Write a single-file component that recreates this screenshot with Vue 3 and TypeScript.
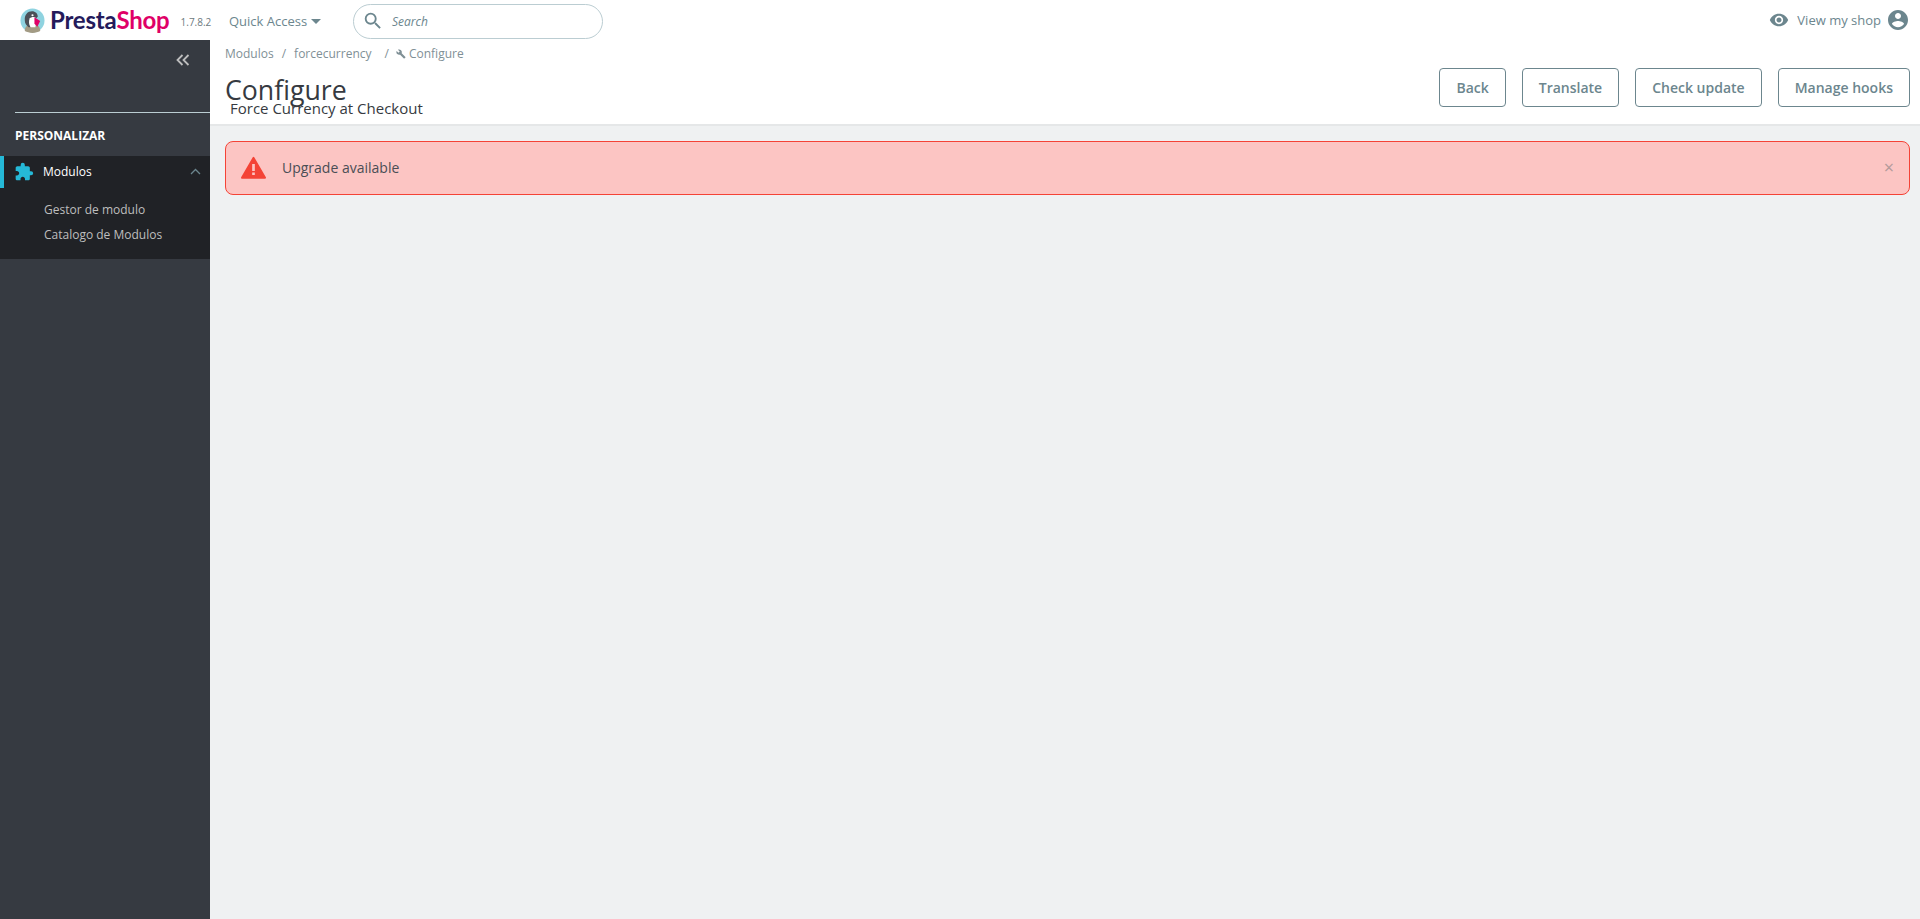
<script setup lang="ts">
const crumbs = ['Modulos', 'forcecurrency']
const toolbar = ['Back', 'Translate', 'Check update', 'Manage hooks']
const subItems = ['Gestor de modulo', 'Catalogo de Modulos']
</script>

<template>
  <div class="page">
    <header class="topbar">
      <div class="logo">
        <svg class="bird" width="25" height="25" viewBox="0 0 26 26">
          <circle cx="13" cy="13" r="12.500" fill="#8fd3e0" />
          <path d="M5 24c0-3 1-5 3-6h10c2 1 3 3 3 6-4 2.500-12 2.500-16 0z" fill="#a39b84" />
          <path d="M5 13C4.500 7 8 3.500 12.500 3.500c3.500 0 6 2.500 6 5.500l-2 2H11c-1 3-1 6 0 9H9c-2.500-2-4-4-4-7z" fill="#4b4f57" />
          <path d="M10 11c1.500-1.500 4-2 6-1l1 3-1 7h-5c-2-3-2-6-1-9z" fill="#fff" />
          <path d="M15 9.500l6 4-3 6-3-3z" fill="#df0067" />
          <circle cx="13" cy="7.500" r="1.100" fill="#fff" />
        </svg>
        <span class="brand"><span class="presta">Presta</span><span class="shop">Shop</span></span>
        <span class="version">1.7.8.2</span>
      </div>
      <div class="quick">Quick Access<span class="caret"></span></div>
      <div class="search">
        <svg width="22" height="22" viewBox="0 0 24 24" fill="#6c868e">
          <path d="M15.500 14h-.79l-.28-.27A6.470 6.470 0 0 0 16 9.500 6.500 6.500 0 1 0 9.500 16c1.610 0 3.090-.59 4.230-1.570l.27.28v.79l5 4.990L20.490 19l-4.990-5zm-6 0C7.010 14 5 11.990 5 9.500S7.010 5 9.500 5 14 7.010 14 9.500 11.990 14 9.500 14z" />
        </svg>
        <span>Search</span>
      </div>
      <div class="shop-link">
        <svg width="20" height="20" viewBox="0 0 24 24" fill="#6c868e">
          <path d="M12 4.500C7 4.500 2.730 7.610 1 12c1.730 4.390 6 7.500 11 7.500s9.270-3.110 11-7.500c-1.730-4.390-6-7.500-11-7.500zM12 17c-2.760 0-5-2.240-5-5s2.240-5 5-5 5 2.240 5 5-2.240 5-5 5zm0-8c-1.660 0-3 1.340-3 3s1.340 3 3 3 3-1.340 3-3-1.340-3-3-3z" />
        </svg>
        <span>View my shop</span>
        <svg width="24" height="24" viewBox="0 0 24 24" fill="#6c868e">
          <path d="M12 2C6.480 2 2 6.480 2 12s4.480 10 10 10 10-4.480 10-10S17.520 2 12 2zm0 3c1.660 0 3 1.340 3 3s-1.340 3-3 3-3-1.340-3-3 1.340-3 3-3zm0 14.200c-2.500 0-4.710-1.280-6-3.220.03-1.990 4-3.080 6-3.080s5.970 1.090 6 3.080c-1.290 1.940-3.500 3.220-6 3.220z" />
        </svg>
      </div>
    </header>

    <div class="body">
      <aside class="sidebar">
        <div class="collapse-row">
          <svg width="14" height="12" viewBox="0 0 14 12" fill="none" stroke="#bebebe" stroke-width="1.800">
            <path d="M6.500 1L1.500 6l5 5M12.500 1l-5 5 5 5" />
          </svg>
        </div>
        <div class="rule"></div>
        <div class="section">PERSONALIZAR</div>
        <div class="group">
          <div class="active-row">
            <svg width="20" height="20" viewBox="0 0 24 24" fill="#25b9d7">
              <path d="M20.500 11H19V7c0-1.100-.9-2-2-2h-4V3.500a2.500 2.500 0 0 0-5 0V5H4c-1.100 0-1.990.9-1.990 2v3.800H3.500c1.490 0 2.700 1.210 2.700 2.700s-1.210 2.700-2.700 2.700H2V20c0 1.100.9 2 2 2h3.800v-1.500c0-1.490 1.210-2.700 2.700-2.700 1.490 0 2.700 1.210 2.700 2.700V22H17c1.100 0 2-.9 2-2v-4h1.500a2.500 2.500 0 0 0 0-5z" />
            </svg>
            <span class="active-label">Modulos</span>
            <svg class="chev" width="11" height="7" viewBox="0 0 11 7" fill="none" stroke="#6c868e" stroke-width="1.300">
              <path d="M1 6l4.500-4.500L10 6" />
            </svg>
          </div>
          <ul class="sub">
            <li v-for="item in subItems" :key="item">{{ item }}</li>
          </ul>
        </div>
      </aside>

      <main class="main">
        <div class="head">
          <div class="head-left">
            <div class="crumbs">
              <template v-for="(c, i) in crumbs" :key="c">
                <span>{{ c }}</span><span class="sep" :class="{ last: i === crumbs.length - 1 }">/</span>
              </template>
              <svg width="10" height="10" viewBox="0 0 24 24" fill="#7f9096">
                <path d="M22.700 19l-9.100-9.100c.9-2.300.4-5-1.500-6.900-2-2-5-2.400-7.400-1.300L9 6 6 9 1.600 4.700C.4 7.100.9 10.100 2.900 12.100c1.900 1.900 4.600 2.400 6.900 1.500l9.100 9.100c.4.400 1 .4 1.400 0l2.300-2.300c.5-.4.500-1.100.1-1.400z" />
              </svg>
              <span class="crumb-last">Configure</span>
            </div>
            <h1>Configure</h1>
            <div class="subtitle">Force Currency at Checkout</div>
          </div>
          <div class="toolbar">
            <button v-for="b in toolbar" :key="b" type="button">{{ b }}</button>
          </div>
        </div>

        <div class="alert">
          <svg width="25" height="23" viewBox="0 0 28 25">
            <path d="M14 1.500L27 24H1z" fill="#f44336" stroke="#f44336" stroke-width="2" stroke-linejoin="round" />
            <path d="M12.500 8.500h3v8h-3zM12.500 18h3v3h-3z" fill="#fcc5c3" />
          </svg>
          <span class="alert-text">Upgrade available</span>
          <span class="close">×</span>
        </div>
      </main>
    </div>
  </div>
</template>

<style>
body {
  margin: 0;
}
</style>

<style scoped>
.page {
  width: 1920px;
  height: 919px;
  overflow: hidden;
  font-family: "Open Sans", sans-serif;
  background: #eff1f2;
}

.topbar {
  height: 40px;
  background: #fff;
  display: flex;
  align-items: center;
  box-sizing: border-box;
  padding: 2px 0 0 20px;
}

.logo {
  display: flex;
  align-items: center;
  width: 209px;
  flex-shrink: 0;
  margin-top: -2px;
}

.brand {
  font-family: Lato, sans-serif;
  font-weight: 700;
  font-size: 24px;
  line-height: 30px;
  margin-left: 5px;
  letter-spacing: -0.2px;
}

.presta {
  color: #251b5b;
}

.shop {
  color: #df0067;
}

.version {
  font-size: 10px;
  color: #6d7a80;
  margin-left: 11px;
  margin-top: 3px;
}

.quick {
  font-size: 13px;
  color: #6c868e;
  width: 124px;
  flex-shrink: 0;
  margin-top: -1px;
}

.caret {
  display: inline-block;
  margin-left: 4px;
  vertical-align: 2px;
  border-left: 5px solid transparent;
  border-right: 5px solid transparent;
  border-top: 5px solid #6c868e;
}

.search {
  width: 250px;
  height: 35px;
  box-sizing: border-box;
  border: 1px solid #bbcdd2;
  border-radius: 18px;
  display: flex;
  align-items: center;
  gap: 8px;
  padding-left: 8px;
  font-size: 12px;
  font-style: italic;
  color: #6c868e;
}

.shop-link {
  margin-left: auto;
  display: flex;
  align-items: center;
  font-size: 13px;
  color: #6c868e;
  padding-right: 10px;
  margin-top: -2px;
}

.shop-link span {
  margin: 0 5px 0 8px;
}

.body {
  display: flex;
  height: 879px;
}

.sidebar {
  width: 210px;
  flex-shrink: 0;
  background: #363a41;
}

.collapse-row {
  height: 72px;
  box-sizing: border-box;
  display: flex;
  justify-content: flex-end;
  padding: 14px 20px 0 0;
}

.rule {
  height: 1px;
  margin-left: 15px;
  background: #bbcdd2;
}

.section {
  margin: 16px 0 0 15px;
  font-size: 12px;
  line-height: 14px;
  font-weight: 700;
  color: #fff;
}

.group {
  margin-top: 13px;
  background: #202226;
  height: 103px;
}

.active-row {
  height: 32px;
  box-sizing: border-box;
  border-left: 4px solid #25b9d7;
  display: flex;
  align-items: center;
  padding: 0 0 1px 10px;
  font-size: 12px;
  color: #fff;
}

.active-label {
  margin-left: 9px;
}

.chev {
  margin-left: auto;
  margin-right: 9px;
}

.sub {
  list-style: none;
  margin: 9px 0 0;
  padding: 0 0 0 44px;
  font-size: 12px;
  line-height: 25px;
  color: #bebebe;
}

.main {
  flex: 1;
  min-width: 0;
}

.head {
  height: 86px;
  box-sizing: border-box;
  background: #fff;
  border-bottom: 2px solid #e5e7e8;
  display: flex;
  justify-content: space-between;
  padding: 0 10px 0 15px;
}

.crumbs {
  padding: 5px 0 0;
  font-size: 12px;
  line-height: 17px;
  color: #7f9096;
  display: flex;
  align-items: center;
}

.sep {
  margin: 0 8px;
}

.sep.last {
  margin: 0 7px 0 13px;
}

.crumb-last {
  margin-left: 3px;
}

h1 {
  margin: 9px 0 0;
  font-size: 26.7px;
  font-weight: 400;
  line-height: 38px;
  color: #363a41;
}

.subtitle {
  margin: -10px 0 0 5px;
  font-size: 15px;
  line-height: 19px;
  color: #363a41;
}

.toolbar {
  display: flex;
  gap: 16px;
  padding-top: 28px;
}

.toolbar button {
  height: 39px;
  box-sizing: border-box;
  padding: 0 16px;
  background: #fff;
  border: 1px solid #6c868e;
  border-radius: 4px;
  font-family: "Open Sans", sans-serif;
  font-size: 14px;
  font-weight: 600;
  color: #6c868e;
}

.alert {
  margin: 15px 10px 0 15px;
  height: 54px;
  box-sizing: border-box;
  background: #fcc5c3;
  border: 1px solid #f44336;
  border-radius: 8px;
  display: flex;
  align-items: center;
  padding: 0 15px 2px 15px;
  font-size: 14px;
  color: #4a4e55;
}

.alert-text {
  margin-left: 16px;
}

.close {
  margin-left: auto;
  font-size: 18px;
  color: #b39a9a;
}
</style>
